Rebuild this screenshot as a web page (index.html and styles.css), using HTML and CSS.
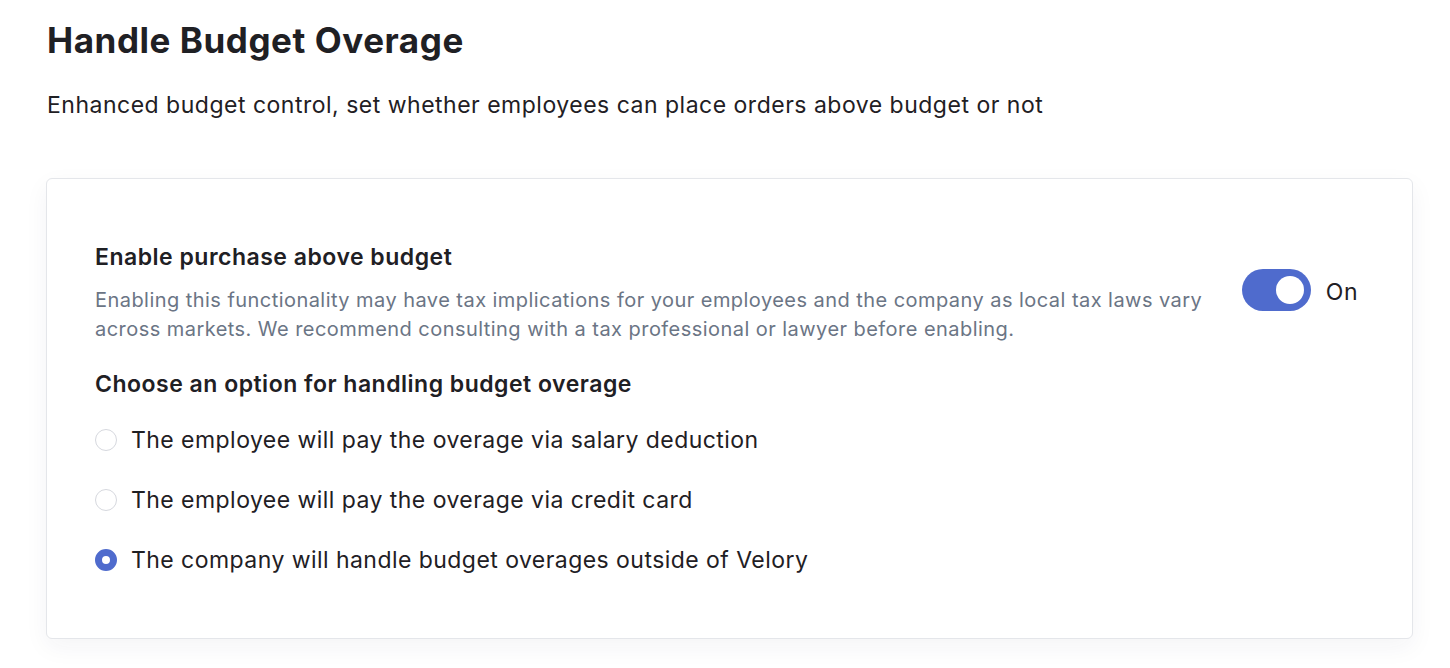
FILE: index.html
```html
<!DOCTYPE html>
<html lang="en">
<head>
<meta charset="utf-8">
<title>Handle Budget Overage</title>
<link rel="stylesheet" href="styles.css">
</head>
<body>
<main class="page">
  <h1 class="title">Handle Budget Overage</h1>
  <p class="subtitle">Enhanced budget control, set whether employees can place orders above budget or not</p>
  <section class="card">
    <div class="setting-row">
      <div class="setting-text">
        <h2 class="setting-title">Enable purchase above budget</h2>
        <p class="setting-desc">Enabling this functionality may have tax implications for your employees and the company as local tax laws vary across markets. We recommend consulting with a tax professional or lawyer before enabling.</p>
      </div>
      <div class="toggle-wrap">
        <span class="toggle on"><span class="knob"></span></span>
        <span class="toggle-label">On</span>
      </div>
    </div>
    <h3 class="options-title">Choose an option for handling budget overage</h3>
    <div class="options">
      <label class="option"><span class="radio"></span><span class="option-text">The employee will pay the overage via salary deduction</span></label>
      <label class="option"><span class="radio"></span><span class="option-text">The employee will pay the overage via credit card</span></label>
      <label class="option"><span class="radio checked"></span><span class="option-text">The company will handle budget overages outside of Velory</span></label>
    </div>
  </section>
</main>
</body>
</html>
```

FILE: styles.css
```css
* { box-sizing: border-box; }
html, body { margin: 0; padding: 0; background: #ffffff; }
body {
  font-family: Inter, "Noto Sans", "Liberation Sans", sans-serif;
  color: #1f2024;
}
.page {
  padding: 20px 37px 30px 46px;
}
.title {
  margin: 0 0 0 1px;
  font-size: 35px;
  line-height: 40px;
  font-weight: 700;
  letter-spacing: 0.55px;
}
.subtitle {
  margin: 30px 0 0 1px;
  font-size: 23px;
  line-height: 30px;
  font-weight: 400;
  letter-spacing: 0.5px;
}
.card {
  margin-top: 58px;
  border: 1px solid #e4e6ea;
  border-radius: 6px;
  background: #fff;
  box-shadow: 0 8px 24px rgba(30, 40, 80, 0.05);
  padding: 63px 48px 63px 48px;
}
.setting-row {
  display: flex;
  align-items: flex-start;
  gap: 30px;
}
.setting-text { flex: 1; }
.setting-title {
  margin: 0;
  font-size: 23px;
  line-height: 30px;
  font-weight: 600;
  letter-spacing: 0.5px;
}
.setting-desc {
  margin: 14px 0 0 0;
  font-size: 20px;
  line-height: 29px;
  color: #6b7585;
  letter-spacing: 0.45px;
}
.toggle-wrap {
  display: flex;
  align-items: center;
  gap: 15px;
  margin-top: 27px;
  margin-right: 6px;
}
.toggle {
  width: 69px;
  height: 42px;
  border-radius: 21px;
  background: #4f6bcd;
  position: relative;
  display: block;
}
.knob {
  position: absolute;
  top: 7px;
  right: 7px;
  width: 28px;
  height: 28px;
  border-radius: 50%;
  background: #fff;
}
.toggle-label {
  font-size: 23px;
  line-height: 30px;
  letter-spacing: 0.5px;
  padding-top: 3px;
}
.options-title {
  margin: 25px 0 0 0;
  font-size: 23px;
  line-height: 30px;
  font-weight: 600;
  letter-spacing: 0.5px;
}
.options {
  display: flex;
  flex-direction: column;
  gap: 30px;
  margin-top: 26px;
}
.option {
  display: flex;
  align-items: center;
  gap: 14px;
  font-size: 23px;
  line-height: 30px;
  letter-spacing: 0.45px;
}
.radio {
  width: 22px;
  height: 22px;
  border-radius: 50%;
  border: 1px solid #d6d8de;
  background: #fff;
  flex: none;
}
.radio.checked {
  border: 7px solid #4f6bcd;
}
```
